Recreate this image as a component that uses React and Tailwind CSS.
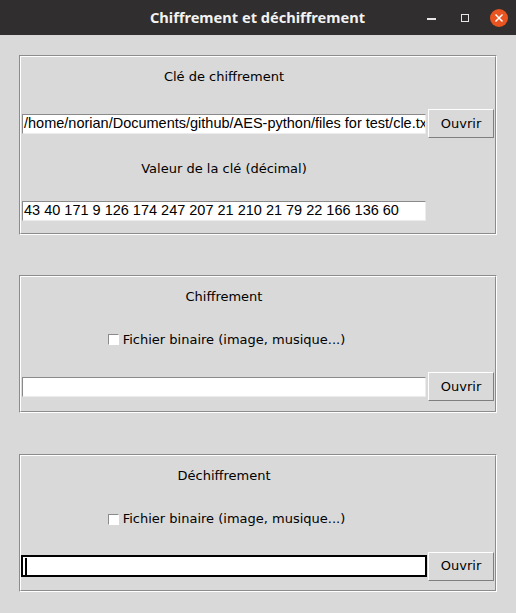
import React from 'react'

const tk = { fontFamily: '"DejaVu Sans", sans-serif' }
const entryFont = { fontFamily: '"Liberation Sans", Arial, sans-serif' }

function Groove({ className, children }) {
  return (
    <div className={`border border-t-[#8c8c8c] border-l-[#8c8c8c] border-b-white border-r-white ${className}`}>
      <div className="flex flex-col border border-t-white border-l-white border-b-[#8c8c8c] border-r-[#8c8c8c]">
        {children}
      </div>
    </div>
  )
}

function Entry({ value = '', focused = false }) {
  return (
    <div className={`flex h-[22px] w-[406px] border ${focused ? 'border-black' : 'border-[#d9d9d9]'}`}>
      <div
        className={`flex flex-1 items-center overflow-hidden whitespace-nowrap bg-white pl-[1px] text-[14.5px] leading-none text-black border ${
          focused
            ? 'border-black'
            : 'border-t-[#8a8a8a] border-l-[#8a8a8a] border-b-[#ececec] border-r-[#ececec]'
        }`}
        style={entryFont}
      >
        {focused && <span className="ml-[1px] h-[17px] w-[2px] shrink-0 bg-black" />}
        {value}
      </div>
    </div>
  )
}

function Button({ label }) {
  return (
    <div className="flex h-[31px] w-[68px] border border-[#d9d9d9]">
      <div
        className="flex flex-1 items-center justify-center border border-t-white border-l-white border-b-[#7f7f7f] border-r-[#7f7f7f] text-[13px] text-black"
        style={tk}
      >
        {label}
      </div>
    </div>
  )
}

function Label({ text, className }) {
  return (
    <div className={`flex w-[406px] items-center justify-center text-[13px] text-black ${className}`} style={tk}>
      {text}
    </div>
  )
}

function Check({ text }) {
  return (
    <div className="flex w-[406px] items-center justify-center gap-[4px] pl-[5px] text-[13px] text-black" style={tk}>
      <span className="h-[11px] w-[11px] border border-t-[#8a8a8a] border-l-[#8a8a8a] border-b-white border-r-white bg-white" />
      <span>{text}</span>
    </div>
  )
}

function FileRow({ className, value, focused }) {
  return (
    <div className={`flex items-center ${className}`}>
      <Entry value={value} focused={focused} />
      <Button label="Ouvrir" />
    </div>
  )
}

export default function App() {
  return (
    <div className="flex h-screen w-full flex-col bg-[#d9d9d9]">
      {/* Title bar */}
      <div className="flex h-[35px] shrink-0 items-center bg-[#302e2e] pl-[146px] pr-[8px]">
        <div className="w-[223px] text-center text-[14.6px] font-bold text-[#f2f2f2]" style={{ fontFamily: '"Noto Sans", sans-serif' }}>
          Chiffrement et déchiffrement
        </div>
        <div className="ml-auto flex items-center">
          <span className="mt-[3px] h-[2px] w-[9px] bg-[#e6e6e6]" />
          <span className="ml-[25px] h-[8px] w-[8px] border border-[#e6e6e6]" />
          <span className="ml-[21px] flex h-[18px] w-[18px] items-center justify-center rounded-full bg-[#e95420]">
            <svg width="10" height="10" viewBox="0 0 10 10">
              <path d="M1.5 1.5 L8.5 8.5 M8.5 1.5 L1.5 8.5" stroke="white" strokeWidth="1.5" />
            </svg>
          </span>
        </div>
      </div>

      <div className="flex flex-col px-[19px] pt-[20px]">
        {/* Clé */}
        <Groove className="w-[478px]">
          <Label text="Clé de chiffrement" className="h-[40px]" />
          <FileRow className="h-[53px]" value="/home/norian/Documents/github/AES-python/files for test/cle.txt" />
          <Label text="Valeur de la clé (décimal)" className="h-[38px]" />
          <div className="flex h-[45px] items-center">
            <Entry value="43 40 171 9 126 174 247 207 21 210 21 79 22 166 136 60" />
          </div>
        </Groove>

        {/* Chiffrement */}
        <Groove className="mt-[40px] w-[478px]">
          <Label text="Chiffrement" className="h-[40px]" />
          <div className="flex h-[45px] items-center">
            <Check text="Fichier binaire (image, musique...)" />
          </div>
          <FileRow className="h-[49px]" value="" />
        </Groove>

        {/* Déchiffrement */}
        <Groove className="mt-[41px] w-[478px]">
          <Label text="Déchiffrement" className="h-[40px]" />
          <div className="flex h-[46px] items-center">
            <Check text="Fichier binaire (image, musique...)" />
          </div>
          <FileRow className="h-[48px]" value="" focused />
        </Groove>
      </div>
    </div>
  )
}
